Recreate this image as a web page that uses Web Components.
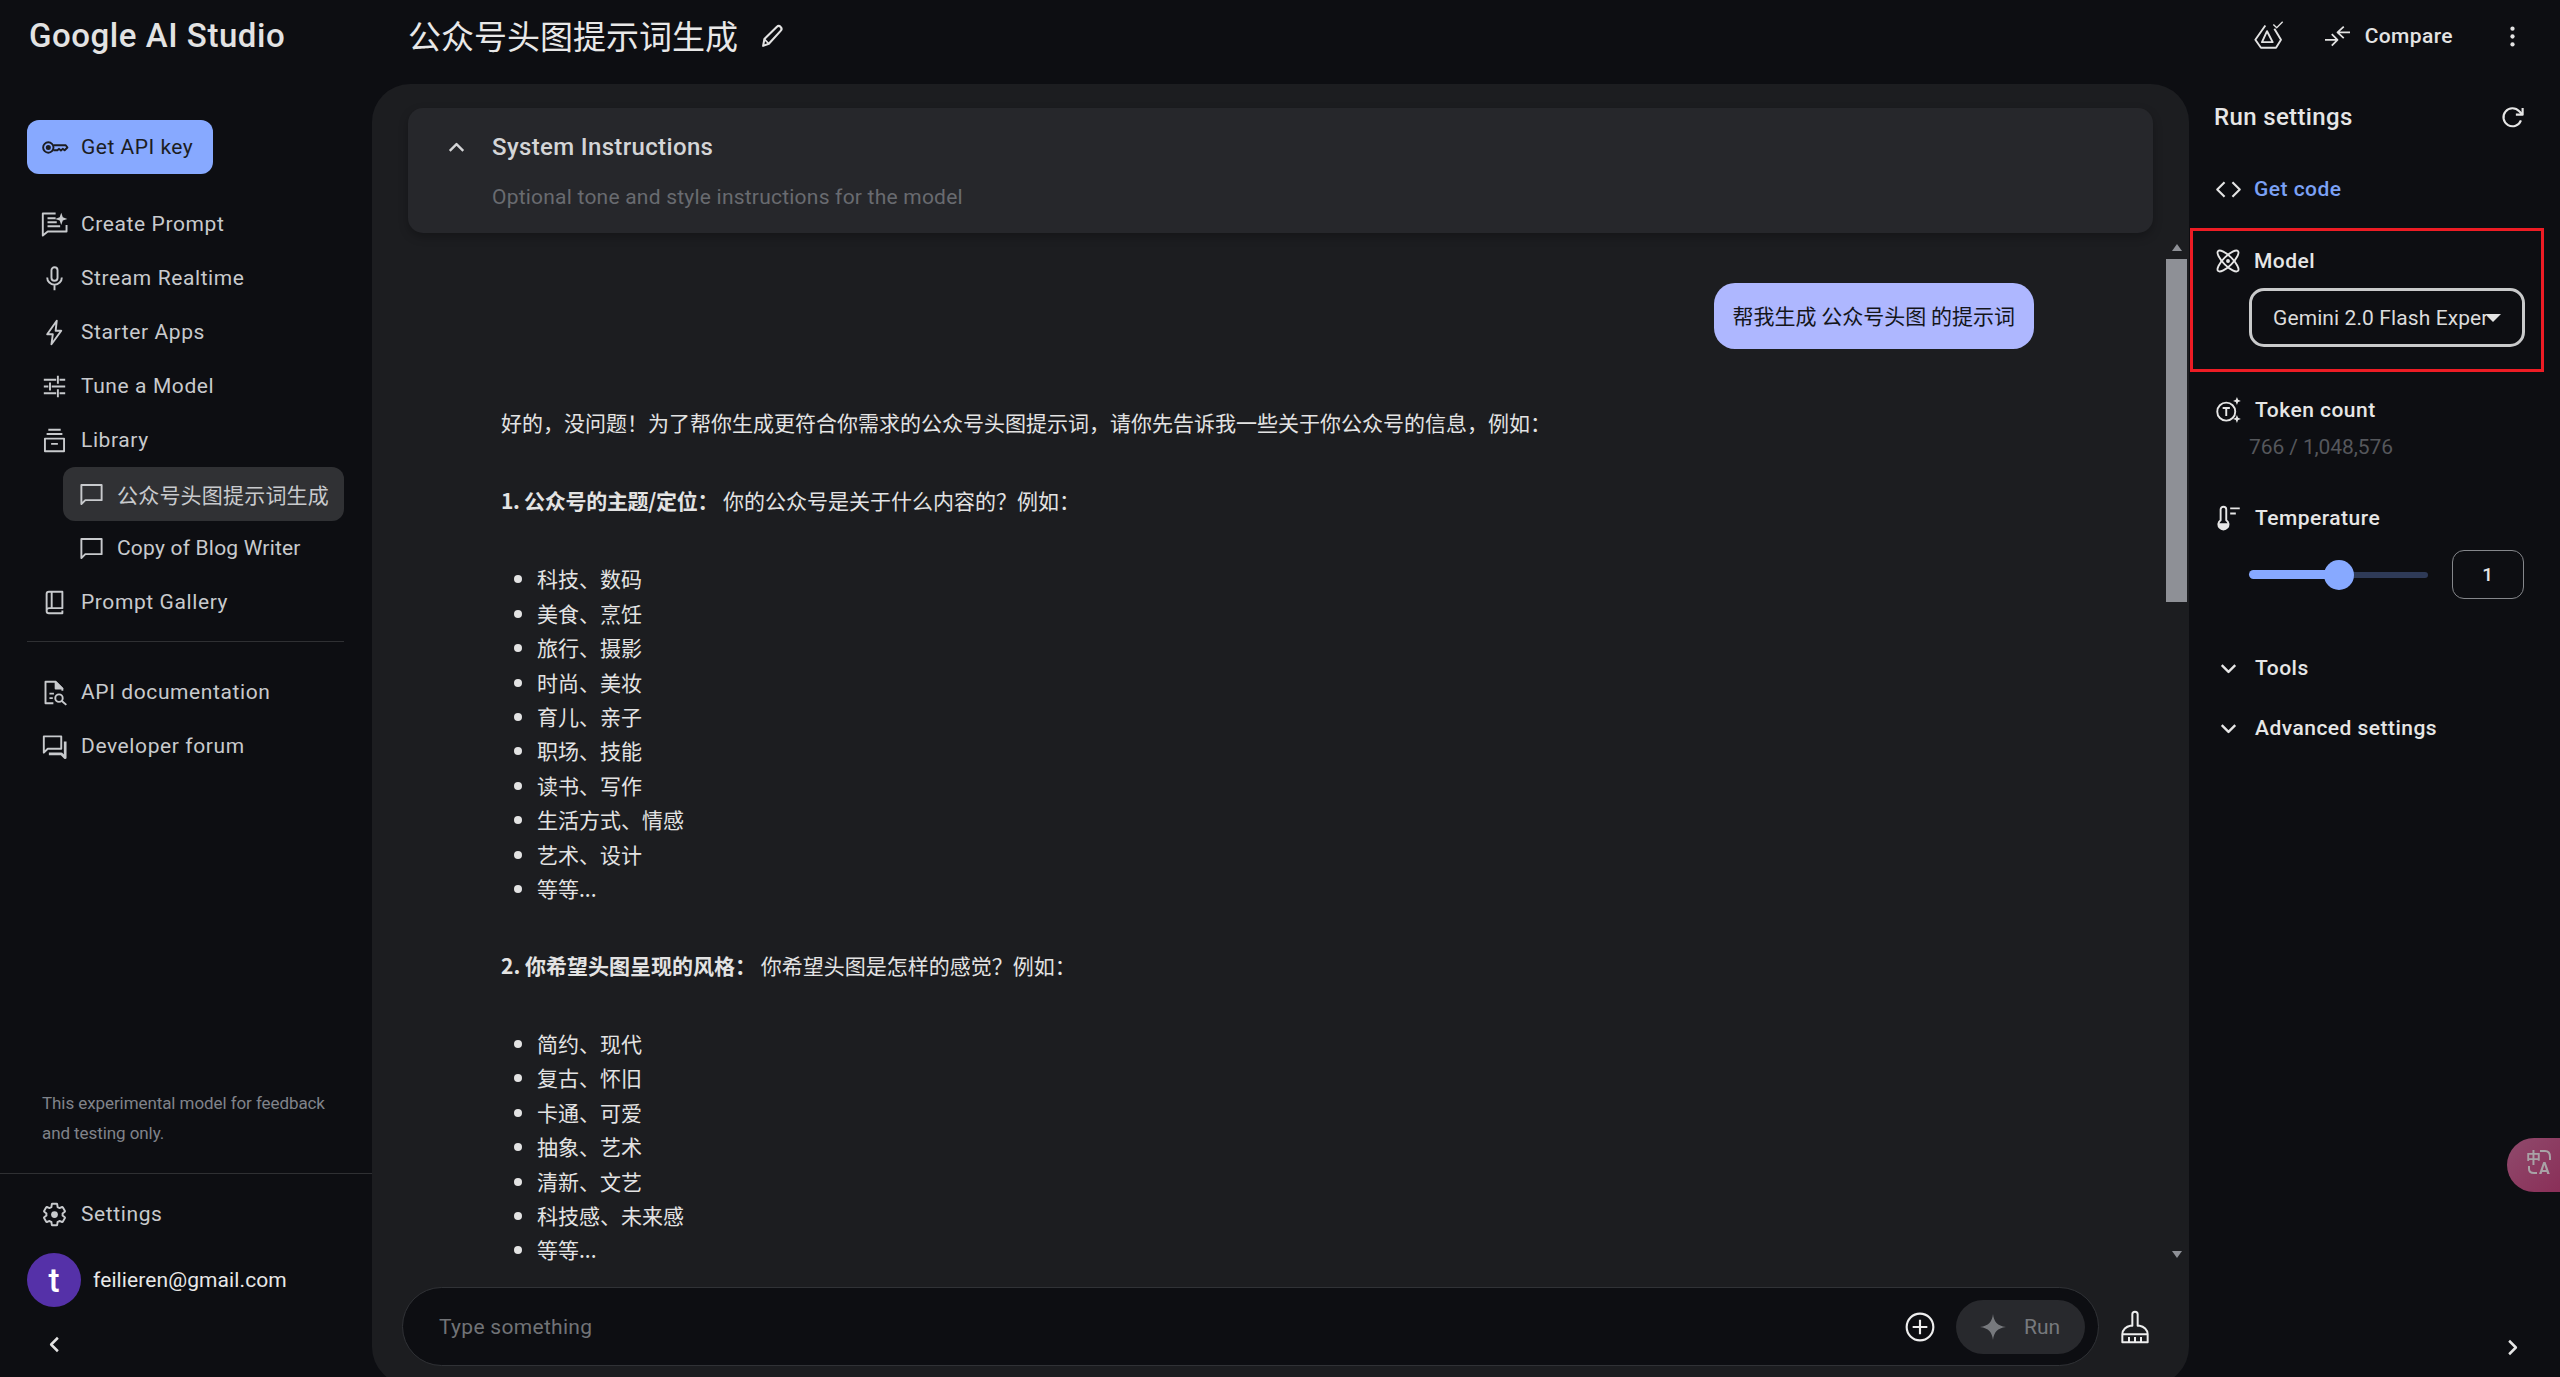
<!DOCTYPE html>
<html lang="zh-CN"><head><meta charset="utf-8"><title>Google AI Studio</title>
<style>
html,body{margin:0;height:100%;background:#0d0e12;overflow:hidden}
body{font-family:Roboto,"Noto Sans CJK SC",sans-serif;color:#e3e3e3}
</style></head><body>
<ai-app></ai-app>
<script>
const ICONS={
key:'<circle cx="6.500" cy="12" r="4.600"/><circle cx="6.500" cy="12" r="1.400" fill="currentColor"/><path d="M11 10h11l1.500 2-2.500 2.400-1.700-1.200-1.600 1.400-1.600-1.400-1.500 1.200H11"/>',
create:'<path d="M22.700 12.500V18.200H6L1.600 21.800V2.200H13"/><path d="M5.800 6.400H13M5.800 10H14M5.800 13.500H17"/><path d="M18 1.500l1.400 4 4 1.500-4 1.500-1.400 4-1.400-4-4-1.500 4-1.500z" fill="currentColor" stroke="none"/>',
mic:'<rect x="9.300" y="2" width="5.400" height="12" rx="2.700"/><path d="M5.500 11a6.500 6.500 0 0 0 13 0M12 17.500V22.500"/>',
bolt:'<path d="M14 1.500 5.500 13.500h5L9.300 22.500l8.700-12h-5z"/>',
tune:'<path d="M2.500 6h11M16.500 6h5M15 2.500v7M2.500 12h4M9.500 12h12M8 8.500v7M2.500 18h11M16.500 18h5M15 14.500v7"/>',
library:'<path d="M6.500 2.500h11M5 6.200h14M3.500 10.300h17V21.500h-17zM9 15h6"/>',
chat:'<path d="M3 3.500h18v13.500H6.500L3 20.500z"/>',
book:'<path d="M5 19.500V4.500A2 2 0 0 1 7 2.500h12V17H7a2.300 2.300 0 0 0-2 2.500 2 2 0 0 0 2 2h12V19M9.500 2.500V17"/>',
doc:'<path d="M11 21.500H4V2.500h9l6 6v2"/><path d="M13 2.500v6h6z" fill="currentColor"/><path d="M7.500 13h4M7.500 17h3"/><circle cx="16" cy="17" r="3.300"/><path d="M18.500 19.500 22.500 23"/>',
forum:'<path d="M2.500 3h15.500v11H6l-3.500 3.500z"/><path d="M21.500 7.500V22l-3.500-3.500H7" stroke-width="2.400"/>',
gear:'<path d="M19.140 12.940c.04-.3.06-.61.06-.94 0-.32-.02-.64-.07-.94l2.030-1.580c.18-.14.23-.41.12-.61l-1.920-3.320c-.12-.22-.37-.29-.59-.22l-2.390.96c-.5-.38-1.030-.7-1.620-.94l-.36-2.540c-.04-.24-.24-.41-.48-.41h-3.840c-.24 0-.43.17-.47.41l-.36 2.540c-.59.24-1.130.57-1.620.94l-2.390-.96c-.22-.08-.47 0-.59.22L2.740 8.870c-.12.21-.08.47.12.61l2.030 1.580c-.05.3-.09.63-.09.94s.02.64.07.94l-2.030 1.580c-.18.14-.23.41-.12.61l1.920 3.320c.12.22.37.29.59.22l2.390-.96c.5.38 1.030.7 1.620.94l.36 2.540c.05.24.24.41.48.41h3.840c.24 0 .44-.17.47-.41l.36-2.540c.59-.24 1.130-.56 1.620-.94l2.390.96c.22.08.47 0 .59-.22l1.920-3.320c.12-.22.07-.47-.12-.61z"/><circle cx="12" cy="12" r="3" fill="currentColor" stroke="none"/>',
left:'<path d="M15 6 9 12l6 6" stroke-width="2.200"/>',
right:'<path d="M9 6l6 6-6 6" stroke-width="2.200"/>',
up:'<path d="M6 15 12 9l6 6" stroke-width="2.100"/>',
down:'<path d="M6 9l6 6 6-6" stroke-width="2.100"/>',
pencil:'<path d="M3 21 4.200 14.500 16 2.800c1.300-1.200 2.700-1.100 3.800 0s1.300 2.500 0 3.800L8.500 19z"/><path d="M4.200 14.500 8.500 19" stroke-width="1.600"/>',
drive:'<path d="M9.200 2.200 .3 14.900 5.300 22H18.700L23.100 14.900 17.200 5.200"/><path d="M10.700 7.300 15.700 17H6.200z"/><path d="M16.300 1.300 19.300 4.300 24.600-1.100" stroke-width="1.200"/>',
compare:'<path d="M0 15.300H12M6.500 9.800 12 15.300 6.500 20.800"/><path d="M24 8H12M18 2.500 12 8l6 5.500"/>',
kebab:'<circle cx="12" cy="5" r="1.900" fill="currentColor" stroke="none"/><circle cx="12" cy="12" r="1.900" fill="currentColor" stroke="none"/><circle cx="12" cy="19" r="1.900" fill="currentColor" stroke="none"/>',
refresh:'<path d="M19.500 14.500A8 8 0 1 1 18 6.500L20.500 9"/><path d="M21 3.500V9.500h-6" />',
code:'<path d="M8.500 5.500 2 12l6.500 6.500M15.500 5.500 22 12l-6.500 6.500"/>',
model:'<ellipse cx="12" cy="12" rx="4.300" ry="13" transform="rotate(-45 12 12)"/><ellipse cx="12" cy="12" rx="4.300" ry="13" transform="rotate(45 12 12)"/><circle cx="12" cy="12" r="1.800" fill="currentColor" stroke="none"/>',
token:'<circle cx="10" cy="13" r="8"/><path d="M6.800 9.800h6.400M10 9.800v7"/><path d="M19.500 0l1 2.500 2.500 1-2.500 1-1 2.500-1-2.500-2.500-1 2.500-1zM19.500 16l1 2.500 2.500 1-2.500 1-1 2.500-1-2.500-2.500-1 2.500-1z" fill="currentColor" stroke="none"/>',
temp:'<path d="M5 13.500V4a2.500 2.500 0 0 1 5 0v9.500a4.500 4.500 0 1 1-5 0z"/><path d="M3.500 17h8a4 4 0 0 1-8 0z" fill="currentColor"/><path d="M13.500 3H22M13.500 7.500h5"/>',
plus:'<circle cx="12" cy="12" r="10"/><path d="M12 6.500v11M6.500 12h11"/>',
spark:'<path d="M12 0c.8 7 4 11 12 12-8 1-11.200 5-12 12-.8-7-4-11-12-12 8-1 11.200-5 12-12z" fill="currentColor" stroke="none"/>',
broom:'<path d="M10 11V2.500a2 2 0 0 1 4 0V11h1.500c3 .5 6 3 6 6.500V23.500H2.500V17.500c0-3.500 3-6 6-6.500z"/><path d="M2.500 17.500h19M7.500 23.500v-4M12 23.500v-4M16.500 23.500v-4"/>'
};
class AiIcon extends HTMLElement{connectedCallback(){
 const s=+(this.getAttribute('size')||27),w=this.getAttribute('w')||1.9;
 this.attachShadow({mode:'open'}).innerHTML=`<style>:host{display:inline-flex;flex:none;width:${s}px;height:${s}px}svg{width:100%;height:100%;overflow:visible;display:block}</style><svg viewBox="0 0 24 24" fill="none" stroke="currentColor" stroke-width="${w}" stroke-linejoin="round">${ICONS[this.getAttribute('name')]||''}</svg>`;
}}
customElements.define('ai-icon',AiIcon);

function def(name,html){customElements.define(name,class extends HTMLElement{constructor(){super();this.attachShadow({mode:'open'}).innerHTML=html}})}

customElements.define('nav-item',class extends HTMLElement{connectedCallback(){
 this.attachShadow({mode:'open'}).innerHTML=`<style>
 :host{display:flex;align-items:center;height:54px;padding-left:41px;gap:13px;font-size:21px;letter-spacing:.6px;color:#c8cacd}
 :host([child]){padding-left:15px;margin-left:63px;width:266px;gap:12px;border-radius:12px;letter-spacing:.2px}
 :host([selected]){background:#303134}
 </style><ai-icon name="${this.getAttribute('icon')}" size="27" w="1.700"></ai-icon><span><slot></slot></span>`;
}});

def('ai-sidebar',`<style>
:host{display:flex;flex-direction:column;width:372px;flex:none;height:1377px;box-sizing:border-box}
.logo{font-size:33px;font-weight:500;color:#e3e3e3;height:72px;line-height:72px;padding-left:29px;letter-spacing:.55px}
.btn{display:flex;align-items:center;gap:13px;width:186px;height:54px;box-sizing:border-box;margin:48px 0 23px 27px;padding-left:14px;background:#87a9ff;border-radius:12px;color:#1c1d22;font-size:21px;letter-spacing:.5px}
hr{border:0;height:1px;background:#2f3033;margin:12px 28px 23px 27px}
.note{margin-top:auto;padding-left:42px;font-size:17px;line-height:30px;color:#80838a;width:300px;letter-spacing:-.08px}
.rule{height:1px;background:#2f3033;margin-top:25px}
.settings{margin-top:13px}
.acct{display:flex;align-items:center;gap:12px;margin:12px 0 0 27px;font-size:21px;letter-spacing:.1px;color:#e8e8e8}
.av{width:54px;height:54px;border-radius:50%;background:#5531a8;color:#fff;display:grid;place-items:center;font-size:33px;font-weight:500}
.col{height:66px;margin-top:4px;display:flex;align-items:center;padding-left:41px;color:#e3e3e3;flex:none}
</style>
<div class="logo">Google AI Studio</div>
<div class="btn"><ai-icon name="key" size="27" w="1.700"></ai-icon><span>Get API key</span></div>
<nav-item icon="create">Create Prompt</nav-item>
<nav-item icon="mic">Stream Realtime</nav-item>
<nav-item icon="bolt">Starter Apps</nav-item>
<nav-item icon="tune">Tune a Model</nav-item>
<nav-item icon="library">Library</nav-item>
<nav-item icon="chat" child selected>公众号头图提示词生成</nav-item>
<nav-item icon="chat" child>Copy of Blog Writer</nav-item>
<nav-item icon="book">Prompt Gallery</nav-item>
<hr>
<nav-item icon="doc">API documentation</nav-item>
<nav-item icon="forum">Developer forum</nav-item>
<div class="note">This experimental model for feedback and testing only.</div>
<div class="rule"></div>
<nav-item icon="gear" class="settings">Settings</nav-item>
<div class="acct"><div class="av">t</div><span>feilieren@gmail.com</span></div>
<div class="col"><ai-icon name="left" size="27"></ai-icon></div>`);

def('ai-header',`<style>
:host{display:flex;align-items:flex-start;height:84px;flex:none;box-sizing:border-box;padding:0 34px 0 36px}
.row{display:flex;align-items:center;height:72px}
.t{font-size:33px;color:#e8e8e8;font-family:"Noto Sans CJK SC",sans-serif;margin-top:-2px}
.p{margin-left:22px;color:#e3e3e3}
.r{margin-left:auto;color:#e3e3e3}
.c{font-size:21px;font-weight:500;letter-spacing:.4px;margin:0 46px 0 15px}
.d{margin-right:43px}
</style>
<div class="row"><span class="t">公众号头图提示词生成</span><ai-icon class="p" name="pencil" size="25" w="2"></ai-icon></div>
<div class="row r"><ai-icon class="d" name="drive" size="27" w="1.700"></ai-icon><ai-icon name="compare" size="25" w="1.700"></ai-icon><span class="c">Compare</span><ai-icon name="kebab" size="27"></ai-icon></div>`);

def('system-card',`<style>
:host{display:block;height:125px;box-sizing:border-box;margin-right:36px;background:#26272b;border-radius:15px;box-shadow:0 4px 10px rgba(0,0,0,.25);padding:0 0 0 35px;flex:none}
.a{display:flex;align-items:center;gap:22px;height:78px;font-size:24px;font-weight:500;color:#d4d5d7;letter-spacing:.35px}
.b{padding-left:49px;font-size:21px;color:#696b70;line-height:28px;margin-top:-3px;letter-spacing:.22px}
</style>
<div class="a"><ai-icon name="up" size="27"></ai-icon><span>System Instructions</span></div>
<div class="b">Optional tone and style instructions for the model</div>`);

def('chat-bubble',`<style>
:host{display:block;width:max-content;margin-left:auto;margin-right:12px;background:#aeb7ff;color:#14151a;font-size:21px;line-height:30px;padding:17px 19px 19px;border-radius:21px;font-family:"Noto Sans CJK SC",sans-serif}
</style><slot></slot>`);

def('fake-scroll',`<style>
:host{display:flex;flex-direction:column;align-items:stretch;width:21px;flex:none;height:100%}
.u,.n{height:0;width:0;border:5px solid transparent;margin:0 auto}
.u{border-bottom:7px solid #8e9096;border-top:0;margin-top:4px;margin-bottom:8px}
.th{height:343px;background:#8e9096}
.sp{flex:1}
.n{border-top:7px solid #8e9096;border-bottom:0;margin-bottom:9px}
</style><div class="u"></div><div class="th"></div><div class="sp"></div><div class="n"></div>`);

def('ai-response',`<style>
:host{display:block;font-family:"Noto Sans CJK SC",sans-serif;font-size:21px;line-height:34.400px;color:#e3e3e3;margin-top:56px}
p{margin:0 0 43.800px}
ul{margin:0 0 42.300px;padding-left:36px}
b{font-weight:700}
b.f{letter-spacing:-.3px}
</style>
<p>好的，没问题！为了帮你生成更符合你需求的公众号头图提示词，请你先告诉我一些关于你公众号的信息，例如：</p>
<p><b class="f">1. 公众号的主题/定位：</b> 你的公众号是关于什么内容的？例如：</p>
<ul><li>科技、数码</li><li>美食、烹饪</li><li>旅行、摄影</li><li>时尚、美妆</li><li>育儿、亲子</li><li>职场、技能</li><li>读书、写作</li><li>生活方式、情感</li><li>艺术、设计</li><li>等等...</li></ul>
<p><b>2. 你希望头图呈现的风格：</b> 你希望头图是怎样的感觉？例如：</p>
<ul><li>简约、现代</li><li>复古、怀旧</li><li>卡通、可爱</li><li>抽象、艺术</li><li>清新、文艺</li><li>科技感、未来感</li><li>等等...</li></ul>`);

def('prompt-bar',`<style>
:host{display:flex;align-items:center;height:79px;width:1697px;box-sizing:border-box;background:#0d0e12;border:1.500px solid #303236;border-radius:40px;padding:0 13px 0 36px;font-size:21px;color:#717377}
.t{flex:1;letter-spacing:.3px}
.pl{color:#eee;margin-right:20px}
.run{display:flex;align-items:center;width:129px;height:54px;border-radius:27px;background:#28292d;padding-left:24px;box-sizing:border-box;gap:18px;color:#77797d}
.run ai-icon{color:#77797d}
</style><span class="t">Type something</span><ai-icon class="pl" name="plus" size="32" w="1.600"></ai-icon><div class="run"><ai-icon name="spark" size="26"></ai-icon><span>Run</span></div>`);

def('chat-panel',`<style>
:host{display:flex;flex-direction:column;width:1817px;flex:none;height:1301px;box-sizing:border-box;background:#1c1d20;border-radius:38px;padding:24px 0 19px 36px}
.mid{flex:1;min-height:0;display:flex;margin:7px 2px 0 0}
.scroll{flex:1;min-width:0;overflow:hidden;padding:43px 120px 0 93px}
.bar{display:flex;align-items:center;margin:20px 0 0 -6px;flex:none}
.br{margin-left:20px;color:#eee}
</style>
<system-card></system-card>
<div class="mid"><div class="scroll"><chat-bubble>帮我生成 公众号头图 的提示词</chat-bubble><ai-response></ai-response></div><fake-scroll></fake-scroll></div>
<div class="bar"><prompt-bar></prompt-bar><ai-icon class="br" name="broom" size="32" w="1.500"></ai-icon></div>`);

def('run-settings',`<style>
:host{display:flex;flex-direction:column;width:371px;height:1293px;flex:none;font-size:21px;font-weight:500;color:#e6e6e6;letter-spacing:.47px}
.h{display:flex;align-items:center;height:66px;padding:0 34px 0 25px;font-size:24px;justify-content:space-between;letter-spacing:.35px}
.row{display:flex;align-items:center;gap:13px;padding-left:26px}
.gc{height:78px;color:#7ba1f5;gap:12px}
.gc ai-icon{color:#e3e3e3}
.box{box-sizing:border-box;height:144px;width:354px;margin-left:1px;border:3px solid #ed1c24;padding:0 0 0 22px}
.box .row{padding-left:0;height:60px}
.sel{box-sizing:border-box;width:276px;height:59px;margin:-3px 0 0 34px;border:3px solid #c9cacb;border-radius:15px;display:flex;align-items:center;padding-left:21px;font-weight:400;color:#dcdcdc;font-size:21px;letter-spacing:.1px}
.sel span{width:213px;overflow:hidden;white-space:nowrap;flex:none}
.sel i{width:0;height:0;border:8px solid transparent;border-top:8px solid #e3e3e3;border-bottom:0;margin-left:-1px}
.tk{margin-top:23px;height:30px}
.v{padding-left:60px;font-weight:400;color:#55575c;line-height:30px;margin-top:7px;font-size:21px;letter-spacing:-.1px}
.tm{margin-top:41px;height:30px}
.sl{display:flex;align-items:center;padding-left:60px;margin-top:17px;height:49px}
.tr{display:flex;align-items:center;width:179px;position:relative;height:30px}
.a{width:90px;height:9px;background:#87a9ff;border-radius:5px 0 0 5px}
.i{flex:1;height:6px;background:#2e3a57;border-radius:0 3px 3px 0}
.th{position:absolute;left:75px;top:0;width:30px;height:30px;border-radius:50%;background:#87a9ff}
.n{margin-left:24px;width:72px;height:49px;box-sizing:border-box;border:1.500px solid #85878b;border-radius:12px;display:grid;place-items:center;font-size:19px}
.c1{margin-top:54px;height:30px}.c2{margin-top:30px;height:30px}
.end{margin-top:auto;align-self:flex-end;margin-right:34px;margin-bottom:16px;height:27px}
</style>
<div class="h"><span>Run settings</span><ai-icon name="refresh" size="27" w="1.900"></ai-icon></div>
<div class="row gc"><ai-icon name="code" size="27"></ai-icon><span>Get code</span></div>
<div class="box"><div class="row"><ai-icon name="model" size="26" w="1.700"></ai-icon><span>Model</span></div>
<div class="sel"><span>Gemini 2.0 Flash Experimental</span><i></i></div></div>
<div class="row tk"><ai-icon name="token" size="27" w="1.700"></ai-icon><span>Token count</span></div>
<div class="v">766 / 1,048,576</div>
<div class="row tm"><ai-icon name="temp" size="27" w="1.700"></ai-icon><span>Temperature</span></div>
<div class="sl"><div class="tr"><div class="a"></div><div class="i"></div><div class="th"></div></div><div class="n">1</div></div>
<div class="row c1"><ai-icon name="down" size="27"></ai-icon><span>Tools</span></div>
<div class="row c2"><ai-icon name="down" size="27"></ai-icon><span>Advanced settings</span></div>
<div class="end"><ai-icon name="right" size="27"></ai-icon></div>`);

def('translate-fab',`<style>
:host{position:fixed;right:0;top:1138px;width:53px;height:54px;border-radius:27px 0 0 27px;background:linear-gradient(135deg,#8f4a6c,#8a2f58);color:#a9a2a6;font-family:"Noto Sans CJK SC",sans-serif;display:block;overflow:hidden}
.z{position:absolute;left:19px;top:10px;font-size:15px;line-height:18px;font-weight:700}
.e{position:absolute;left:32px;top:21px;font-size:16px;line-height:20px;font-weight:700;font-family:Roboto,sans-serif}
svg{position:absolute;left:0;top:0;width:53px;height:54px}
</style><span class="z">中</span><span class="e">A</span><svg viewBox="0 0 53 54" fill="none" stroke="currentColor" stroke-width="2"><path d="M33 13h5q5 0 5 6v3"/><path d="M22 28v3q0 4 5 4h3"/></svg>`);

def('ai-app',`<style>
:host{display:flex;width:2560px;height:1377px;overflow:hidden;background:#0d0e12}
.m{display:flex;flex-direction:column;flex:1;min-width:0;height:1377px;overflow:hidden}
.b{display:flex;flex:1;min-height:0}
</style>
<ai-sidebar></ai-sidebar>
<div class="m"><ai-header></ai-header><div class="b"><chat-panel></chat-panel><run-settings></run-settings></div></div>
<translate-fab></translate-fab>`);
</script>
</body></html>
